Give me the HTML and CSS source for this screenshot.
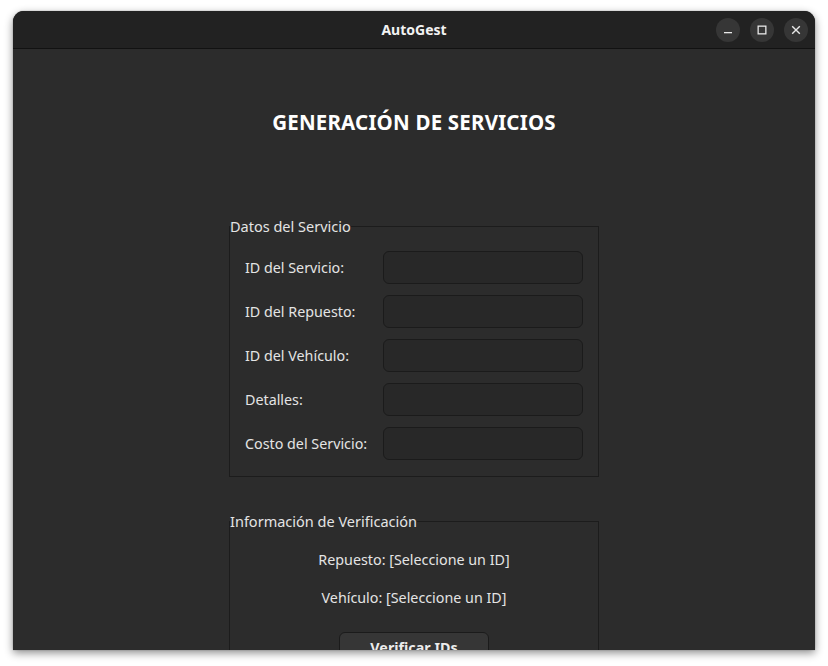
FILE: index.html
```html
<!DOCTYPE html>
<html lang="es">
<head>
<meta charset="utf-8">
<title>AutoGest</title>
<link rel="stylesheet" href="styles.css">
</head>
<body>
<div class="window">
  <header class="titlebar">
    <div class="spacer"></div>
    <div class="title">AutoGest</div>
    <div class="controls">
      <button class="ctl" aria-label="Minimizar"><svg width="10" height="10" viewBox="0 0 10 10"><rect x="1" y="7" width="8" height="1.3" fill="#e8e8e8"/></svg></button>
      <button class="ctl" aria-label="Maximizar"><svg width="10" height="10" viewBox="0 0 10 10"><rect x="1.15" y="1.15" width="7.7" height="7.7" fill="none" stroke="#e8e8e8" stroke-width="1.3"/></svg></button>
      <button class="ctl" aria-label="Cerrar"><svg width="10" height="10" viewBox="0 0 10 10"><path d="M1.2 1.2 L8.8 8.8 M8.8 1.2 L1.2 8.8" stroke="#e8e8e8" stroke-width="1.4" fill="none"/></svg></button>
    </div>
  </header>
  <main class="content">
    <div class="column">
      <h1 class="heading">GENERACIÓN DE SERVICIOS</h1>
      <div class="sep"></div>
      <fieldset class="group">
        <legend class="legend">Datos del Servicio</legend>
        <div class="form">
          <div class="row"><label class="label">ID del Servicio:</label><input class="field" type="text"></div>
          <div class="row"><label class="label">ID del Repuesto:</label><input class="field" type="text"></div>
          <div class="row"><label class="label">ID del Vehículo:</label><input class="field" type="text"></div>
          <div class="row"><label class="label">Detalles:</label><input class="field" type="text"></div>
          <div class="row"><label class="label">Costo del Servicio:</label><input class="field" type="text"></div>
        </div>
      </fieldset>
      <fieldset class="group group-verify">
        <legend class="legend">Información de Verificación</legend>
        <div class="verify">
          <p class="info">Repuesto: [Seleccione un ID]</p>
          <p class="info">Vehículo: [Seleccione un ID]</p>
          <button class="btn">Verificar IDs</button>
        </div>
      </fieldset>
    </div>
  </main>
</div>
</body>
</html>
```
FILE: styles.css
```css
html, body {
  margin: 0;
  padding: 0;
  background: #ffffff;
  height: 100%;
  overflow: hidden;
}
body {
  font-family: "Noto Sans", "Open Sans", "DejaVu Sans", sans-serif;
  color: #e8e8e8;
  padding: 11px 13px 0 13px;
  box-sizing: border-box;
}
.window {
  width: 802px;
  height: 639px;
  border-radius: 11px 11px 0 0;
  overflow: hidden;
  background: #2c2c2c;
  display: flex;
  flex-direction: column;
  box-shadow: 0 3px 9px rgba(0,0,0,0.45), 0 0 1px rgba(0,0,0,0.6);
}
.titlebar {
  height: 37px;
  flex: 0 0 37px;
  background: #222222;
  border-bottom: 1px solid #121212;
  display: grid;
  grid-template-columns: 1fr auto 1fr;
  align-items: center;
}
.title {
  font-weight: 700;
  font-size: 14px;
  line-height: 18px;
  margin-top: 0;
  color: #f2f2f2;
}
.controls {
  display: flex;
  justify-content: flex-end;
  gap: 10px;
  padding-right: 7px;
}
.ctl {
  width: 24px;
  height: 24px;
  border-radius: 50%;
  border: none;
  background: #363636;
  padding: 0;
  display: flex;
  align-items: center;
  justify-content: center;
}
.content {
  flex: 1;
  overflow: hidden;
  display: flex;
  justify-content: center;
}
.column {
  width: 370px;
  display: flex;
  flex-direction: column;
  padding-top: 59px;
}
.heading {
  margin: 0;
  text-align: center;
  font-size: 20.5px;
  font-weight: 700;
  color: #ffffff;
  line-height: 28px;
  letter-spacing: 0.2px;
}
.sep {
  margin: 45px 0 0 0;
  height: 1px;
  background: #242424;
}
.group {
  margin: 36px 0 0 0;
  padding: 0;
  border: 1px solid #1c1c1c;
  min-width: 0;
}
.group-verify {
  margin-top: 35px;
}
.legend {
  padding: 0;
  margin: 0;
  font-size: 14.5px;
  line-height: 18px;
  color: #e4e4e4;
}
.form {
  padding: 16px 15px 16px 15px;
  display: flex;
  flex-direction: column;
  gap: 11px;
}
.row {
  display: grid;
  grid-template-columns: 138px 200px;
  align-items: center;
}
.label {
  font-size: 14.3px;
  color: #e4e4e4;
}
.field {
  height: 33px;
  box-sizing: border-box;
  border: 1px solid #1b1b1b;
  border-radius: 6px;
  background: #282828;
  margin: 0;
  outline: none;
}
.verify {
  display: flex;
  flex-direction: column;
  align-items: center;
  padding-top: 21px;
}
.info {
  margin: 0 0 20px 0;
  font-size: 14.3px;
  line-height: 18px;
  color: #e4e4e4;
}
.info + .info {
  margin-bottom: 25px;
}
.btn {
  margin-top: 0;
  width: 150px;
  height: 34px;
  background: #363636;
  border: 1px solid #1b1b1b;
  border-radius: 6px;
  color: #ececec;
  font-family: inherit;
  font-weight: 700;
  font-size: 14.3px;
  padding: 6px 0 0 0;
  line-height: 18px;
  display: flex;
  justify-content: center;
  align-items: flex-start;
}
```
